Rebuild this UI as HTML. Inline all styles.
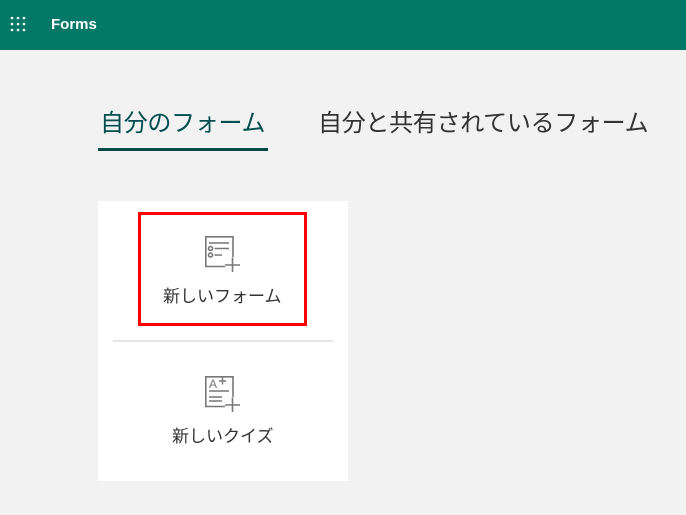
<!DOCTYPE html>
<html><head><meta charset="utf-8"><style>
*{margin:0;padding:0;box-sizing:border-box}
body{width:686px;height:515px;background:#f2f2f2;font-family:"Liberation Sans","Noto Sans CJK JP",sans-serif;position:relative;overflow:hidden}
.hdr{position:absolute;left:0;top:0;width:686px;height:50px;background:#037867}
.forms{position:absolute;left:51px;top:16px;color:#fff;font-size:15px;font-weight:bold}
.tab{position:absolute;top:109px;font-size:24px;letter-spacing:-0.3px;line-height:30px;white-space:nowrap}
.ul{position:absolute;left:98px;top:148px;width:170px;height:3px;background:#004a4a}
.card{position:absolute;left:98px;top:201px;width:250px;height:280px;background:#fff}
.red{position:absolute;left:138px;top:212px;width:169px;height:114px;border:3px solid #f00}
.div{position:absolute;left:113px;top:340px;width:220px;height:2px;background:#e6e6e6}
.lbl{position:absolute;font-size:17px;color:#333;white-space:nowrap;line-height:20px}
</style></head><body>
<div class="hdr">
<svg style="position:absolute;left:10px;top:16px" width="16" height="16">
<g fill="#fff"><circle cx="2" cy="2" r="1.3"/><circle cx="8" cy="2" r="1.3"/><circle cx="14" cy="2" r="1.3"/><circle cx="2" cy="8" r="1.3"/><circle cx="8" cy="8" r="1.3"/><circle cx="14" cy="8" r="1.3"/><circle cx="2" cy="14" r="1.3"/><circle cx="8" cy="14" r="1.3"/><circle cx="14" cy="14" r="1.3"/></g></svg>
<div class="forms">Forms</div>
</div>
<div class="tab" style="left:100px;color:#004e50">自分のフォーム</div>
<div class="tab" style="left:318px;color:#333">自分と共有されているフォーム</div>
<div class="ul"></div>
<div class="card"></div>
<div class="red"></div>
<svg style="position:absolute;left:200px;top:230px" width="45" height="50" fill="none" stroke="#777" stroke-width="1.6">
<path d="M25 36.5H5.8V6.8H33V27"/>
<path d="M9 13H29M14.5 18.5H29M14.5 25H22"/>
<circle cx="10.5" cy="18.5" r="2"/><circle cx="10.5" cy="25" r="2"/>
<path d="M25 35H40M32.5 27.5V42"/>
</svg>
<div class="lbl" style="left:163px;top:287px">新しいフォーム</div>
<div class="div"></div>
<svg style="position:absolute;left:200px;top:370px" width="45" height="50" fill="none" stroke="#777" stroke-width="1.6">
<path d="M25 36.5H5.8V6.8H33V27"/>
<path d="M9 21H29M9 27H22M9 31H22"/>
<text x="9" y="18" font-size="12" fill="#777" stroke="none" font-family="Liberation Sans">A</text>
<path d="M19 11H26M22.5 7.5V14.5" stroke-width="1.4"/>
<path d="M25 35H40M32.5 27.5V42"/>
</svg>
<div class="lbl" style="left:172px;top:427px">新しいクイズ</div>
</body></html>
